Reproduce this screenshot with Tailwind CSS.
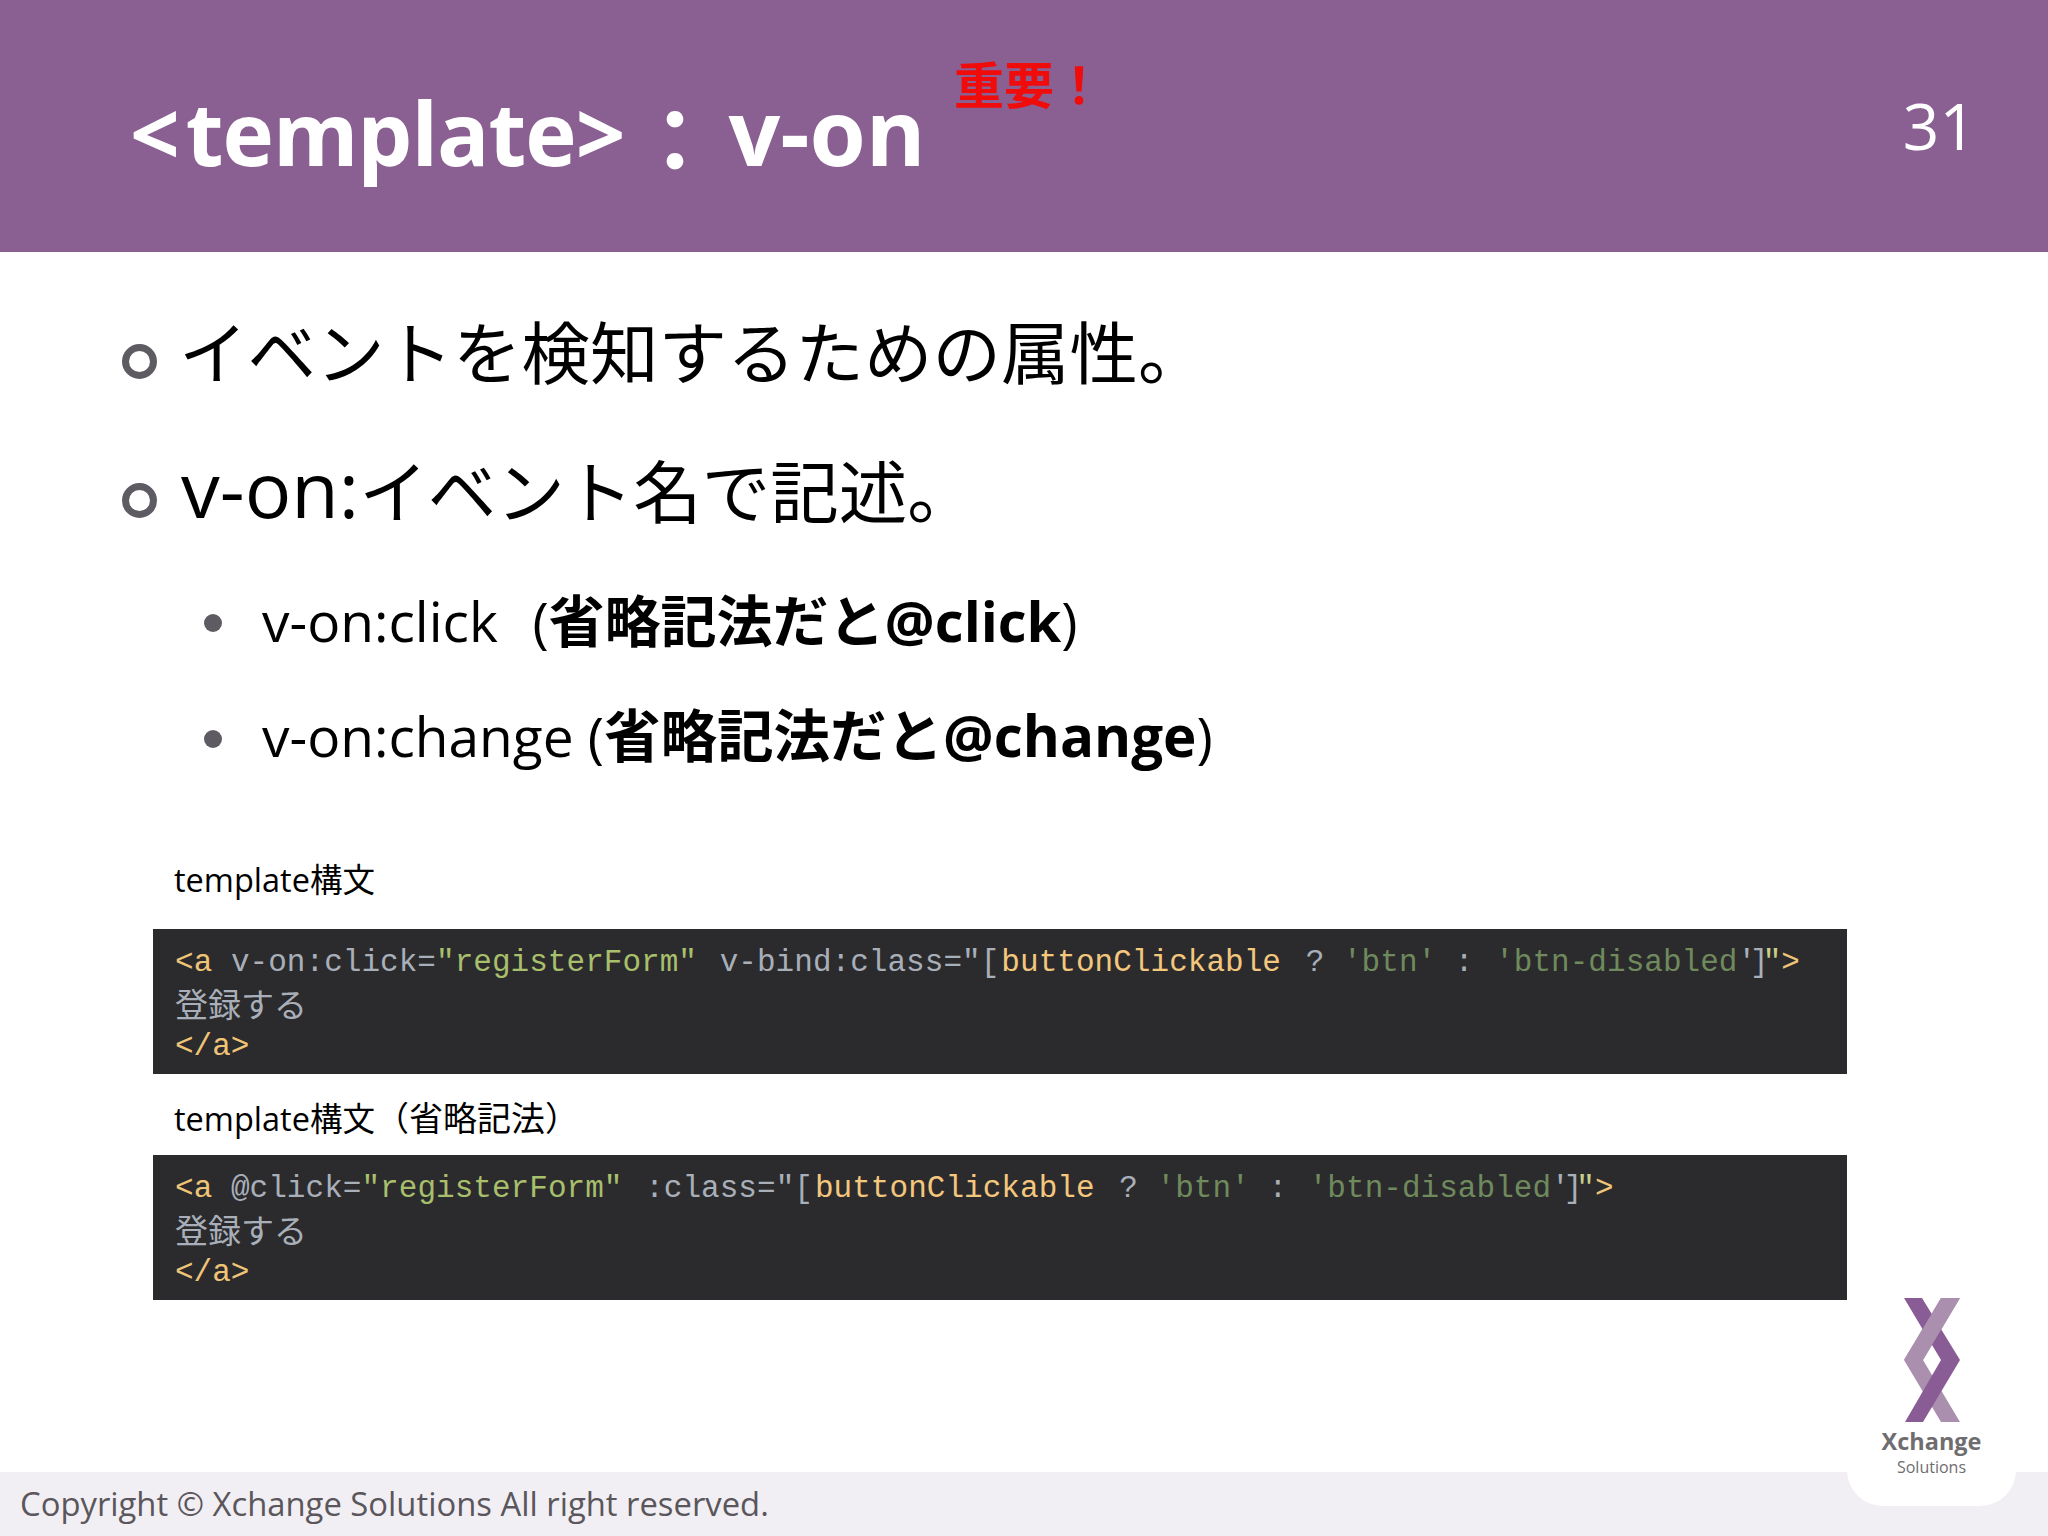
<!DOCTYPE html>
<html lang="ja">
<head>
    <meta charset="UTF-8">
    <title>template: v-on</title>
    <script src="https://cdn.jsdelivr.net/npm/@tailwindcss/browser@4"></script>
</head>
<body class="bg-white">
<div class="relative w-[2048px] h-[1536px] overflow-hidden flex flex-col text-black font-['Open_Sans','Noto_Sans_CJK_JP',sans-serif]">

    <!-- header -->
    <header class="h-[252px] shrink-0 bg-[#8a5f92] flex items-center justify-between pl-[130px] pr-[72px] text-white">
        <div class="relative flex items-center h-[100px] mt-[10px]">
            <h1 class="text-[87px] leading-[100px] font-bold whitespace-nowrap">&lt;<span class="ml-[6px] tracking-[-1px]">template</span>&gt;<span class="inline-block translate-y-[7px] mr-[10px] ml-[6px]">：</span><span class="text-[91px]">v-on</span></h1>
            <span class="absolute left-[824px] top-[-31px] text-[50px] leading-[70px] font-bold text-[#f10c0c] whitespace-nowrap">重要！</span>
        </div>
        <span class="text-[64px] leading-[80px] font-normal">31</span>
    </header>

    <!-- bullets -->
    <ul class="pt-[32px] pl-[122px]">
        <li class="h-[139px] flex items-center gap-[22px] text-[68.5px]">
            <span class="w-[35px] h-[35px] rounded-full border-[7px] border-[#5f5b63] mt-[15px]"></span>
            <span>イベントを検知するための属性。</span>
        </li>
        <li class="h-[139px] flex items-center gap-[22px] text-[68.5px]">
            <span class="w-[35px] h-[35px] rounded-full border-[7px] border-[#5f5b63] mt-[15px]"></span>
            <span class="pl-[2px] mb-[8px]"><span class="text-[77.5px]">v-on:</span>イベント名で記述。</span>
        </li>
    </ul>
    <ul class="pl-[204px]">
        <li class="h-[116px] flex items-center gap-[40px] text-[55px] whitespace-pre">
            <span class="w-[18px] h-[18px] rounded-full bg-[#5f5b63] mt-[6px]"></span>
            <span>v-on:click  <span class="ml-[6px]">(</span><b class="text-[56px]">省略記法だと@click</b>)</span>
        </li>
        <li class="h-[116px] flex items-center gap-[40px] text-[55px] whitespace-pre">
            <span class="w-[18px] h-[18px] rounded-full bg-[#5f5b63] mt-[6px]"></span>
            <span>v-on:change (<b class="text-[56.5px]">省略記法だと@change</b>)</span>
        </li>
    </ul>

    <!-- code samples -->
    <section class="pl-[153px] w-[1847px]">
        <p class="h-[135px] pl-[21px] pt-[61px] text-[32.5px] leading-[50px]">template構文</p>
        <div class="h-[145px] bg-[#2b2b2d] pl-[22px] pt-[13px] text-[#a9afb9] font-['Liberation_Mono','Noto_Sans_CJK_JP',monospace]">
            <div class="h-[42px] text-[31px] tracking-[0.04px] leading-[42px] whitespace-pre"><span class="text-[#efc477]">&lt;a</span> v-on:click=<span class="text-[#a8bf6c]">"registerForm"</span> <span class="ml-[4px]">v-bind:class="[</span><span class="ml-[2px] text-[#f3c77d]">buttonClickable</span> <span class="ml-[6px]">?</span> <span class="text-[#6f8a5c]">'btn'</span> : <span class="ml-[3px] text-[#6f8a5c]">'btn-disabled</span><span class="tracking-[-6px]">′]</span><span class="text-[#c9cf8a]">″</span><span class="text-[#efc477]">&gt;</span></div>
            <div class="h-[49px] text-[33px] leading-[49px]">登録する</div>
            <div class="h-[28px] text-[31px] leading-[28px] text-[#efc477]">&lt;/a&gt;</div>
        </div>
        <p class="h-[81px] pl-[21px] pt-[19px] text-[32.5px] leading-[50px]">template構文<span class="text-[34px]">（省略記法）</span></p>
        <div class="h-[145px] bg-[#2b2b2d] pl-[22px] pt-[13px] text-[#a9afb9] font-['Liberation_Mono','Noto_Sans_CJK_JP',monospace]">
            <div class="h-[42px] text-[31px] tracking-[0.04px] leading-[42px] whitespace-pre"><span class="text-[#efc477]">&lt;a</span> @click=<span class="text-[#a8bf6c]">"registerForm"</span> <span class="ml-[4px]">:class="[</span><span class="ml-[2px] text-[#f3c77d]">buttonClickable</span> <span class="ml-[6px]">?</span> <span class="text-[#6f8a5c]">'btn'</span> : <span class="ml-[3px] text-[#6f8a5c]">'btn-disabled</span><span class="tracking-[-6px]">′]</span><span class="text-[#c9cf8a]">″</span><span class="text-[#efc477]">&gt;</span></div>
            <div class="h-[49px] text-[33px] leading-[49px]">登録する</div>
            <div class="h-[28px] text-[31px] leading-[28px] text-[#efc477]">&lt;/a&gt;</div>
        </div>
    </section>

    <!-- footer -->
    <footer class="mt-auto h-[64px] shrink-0 bg-[#f1eff3] flex items-center pl-[20px] text-[32.8px] text-[#5a565c]">
        Copyright © Xchange Solutions All right reserved.
    </footer>

    <!-- logo card -->
    <div class="absolute left-[1847px] top-[1280px] w-[169px] h-[226px] bg-white rounded-b-[36px] flex flex-col items-center pt-[18px]">
        <svg class="w-[56px] h-[124px]" viewBox="0 0 56 124">
            <polygon fill="#ab8fae" points="56,0 37,0 0,62 37,124 56,124 19,62"/>
            <polygon fill="#8a5c96" points="0,0 18,0 56,62 19,124 1,124 37,62"/>
            <polygon fill="#ab8fae" points="56,0 37,0 0,62 19,62"/>
        </svg>
        <span class="mt-[6px] text-[23.5px] leading-[27px] font-bold text-[#6f6d70]">Xchange</span>
        <span class="mt-[2px] text-[16px] leading-[20px] text-[#6f6d70]">Solutions</span>
    </div>
</div>
</body>
</html>
